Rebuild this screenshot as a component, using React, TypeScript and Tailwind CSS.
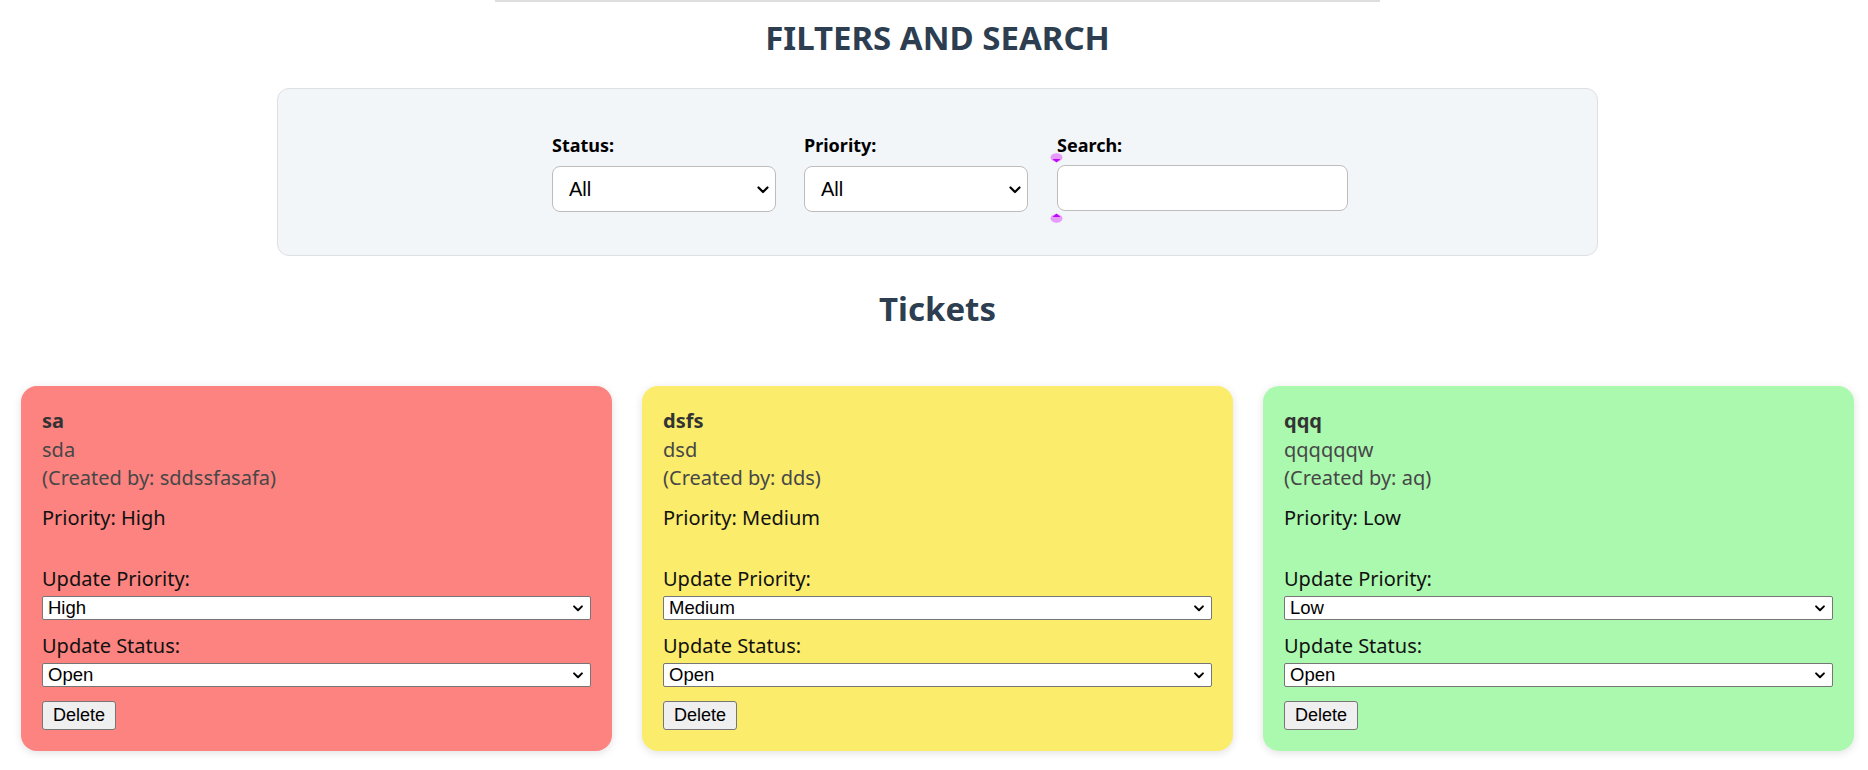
import React from "react";

const tickets = [
  { id: 1, title: "sa", description: "sda", createdBy: "sddssfasafa", priority: "High", status: "Open", bg: "bg-[#fc8380]" },
  { id: 2, title: "dsfs", description: "dsd", createdBy: "dds", priority: "Medium", status: "Open", bg: "bg-[#fbec6b]" },
  { id: 3, title: "qqq", description: "qqqqqqw", createdBy: "aq", priority: "Low", status: "Open", bg: "bg-[#abf9af]" },
];

const Chevron = ({ className }: { className: string }) => (
  <svg viewBox="0 0 12 8" className={className} fill="none" stroke="currentColor" strokeWidth="2.2" strokeLinecap="round" strokeLinejoin="round">
    <path d="M1.5 1.5 6 6l4.5-4.5" />
  </svg>
);

const FilterSelect = ({ value, width }: { value: string; width: string }) => (
  <div className={`relative ${width}`}>
    <select
      defaultValue={value}
      className="block appearance-none w-full h-[46px] bg-white border border-[#bdbdbd] rounded-lg pl-4 pr-8 text-[20px] text-black font-['Liberation_Sans',Arial,sans-serif] outline-none"
    >
      <option>{value}</option>
    </select>
    <Chevron className="absolute right-[7px] top-[20px] w-[12px] h-[8px] text-black pointer-events-none" />
  </div>
);

const CardSelect = ({ value }: { value: string }) => (
  <div className="relative w-full">
    <select
      defaultValue={value}
      className="block appearance-none w-full h-[24px] bg-white border border-[#767676] rounded-[2px] pl-[5px] text-[18.5px] leading-[22px] text-black font-['Liberation_Sans',Arial,sans-serif] outline-none"
    >
      <option>{value}</option>
    </select>
    <Chevron className="absolute right-[7px] top-[9px] w-[12px] h-[7px] text-black pointer-events-none" />
  </div>
);

const Dot = ({ flip }: { flip?: boolean }) => (
  <svg viewBox="0 0 13 10" className="block w-[13px] h-[10px]">
    <g transform={flip ? "rotate(180 6.5 5)" : undefined}>
      <ellipse cx="6.5" cy="4.5" rx="6" ry="4.2" fill="#e69cfa" />
      <path d="M2.5 6 L10.5 6 L6.5 9.5 Z" fill="#c400ff" />
    </g>
  </svg>
);

const TicketCard = ({ t }: { t: (typeof tickets)[number] }) => (
  <div className={`${t.bg} rounded-2xl shadow-[0_2px_8px_rgba(0,0,0,0.12)] px-[21px] pt-[21px] pb-[21px] text-[20px] leading-[28.5px]`}>
    <div className="font-bold text-[#333]">{t.title}</div>
    <div className="text-[#474747]">{t.description}</div>
    <div className="text-[#474747]">(Created by: {t.createdBy})</div>
    <div className="mt-[11px] text-[#111]">Priority: {t.priority}</div>
    <label className="block mt-[33px] mb-[2.5px] text-[#111]">Update Priority:</label>
    <CardSelect value={t.priority} />
    <label className="block mt-[12px] mb-[2px] text-[#111]">Update Status:</label>
    <CardSelect value={t.status} />
    <button className="block mt-[14px] h-[29px] px-[10px] bg-[#efefef] border border-[#767676] rounded-[3px] text-[18px] leading-none text-black font-['Liberation_Sans',Arial,sans-serif]">
      Delete
    </button>
  </div>
);

export default function App() {
  return (
    <div className="min-h-screen bg-white pl-[7px] font-['Noto_Sans','Open_Sans',sans-serif]">
      <div className="w-[885px] h-[2px] mx-auto bg-[#dedede]" />
      <h1 className="mt-[14px] text-center text-[33px] leading-[44px] font-bold text-[#2c3e50]">FILTERS AND SEARCH</h1>

      <div className="mt-[28px] mx-auto w-[1321px] bg-[#f3f6f9] border border-[#dcdfe3] rounded-xl pl-[274px] pt-[44px] pb-[43px]">
        <div className="flex gap-7">
          <div className="w-[224px]">
            <label className="block mb-[9px] text-[18px] leading-[24px] font-bold text-black">Status:</label>
            <FilterSelect value="All" width="w-[224px]" />
          </div>
          <div className="w-[225px]">
            <label className="block mb-[9px] text-[18px] leading-[24px] font-bold text-black">Priority:</label>
            <FilterSelect value="All" width="w-[224px]" />
          </div>
          <div className="relative w-[291px]">
            <label className="block mb-[8px] text-[18px] leading-[24px] font-bold text-black">Search:</label>
            <input
              type="text"
              className="block w-[291px] h-[46px] bg-white border border-[#bdbdbd] rounded-lg px-3 text-[18px] outline-none"
            />
            <div className="absolute left-[-7px] top-[20px]">
              <Dot />
            </div>
            <div className="absolute left-[-7px] top-[80px]">
              <Dot flip />
            </div>
          </div>
        </div>
      </div>

      <h2 className="mt-[31px] text-center text-[33px] leading-[44px] font-bold text-[#2c3e50]">Tickets</h2>

      <div className="mt-[55px] px-[14px] grid grid-cols-3 gap-[30px]">
        {tickets.map((t) => (
          <TicketCard key={t.id} t={t} />
        ))}
      </div>
    </div>
  );
}
